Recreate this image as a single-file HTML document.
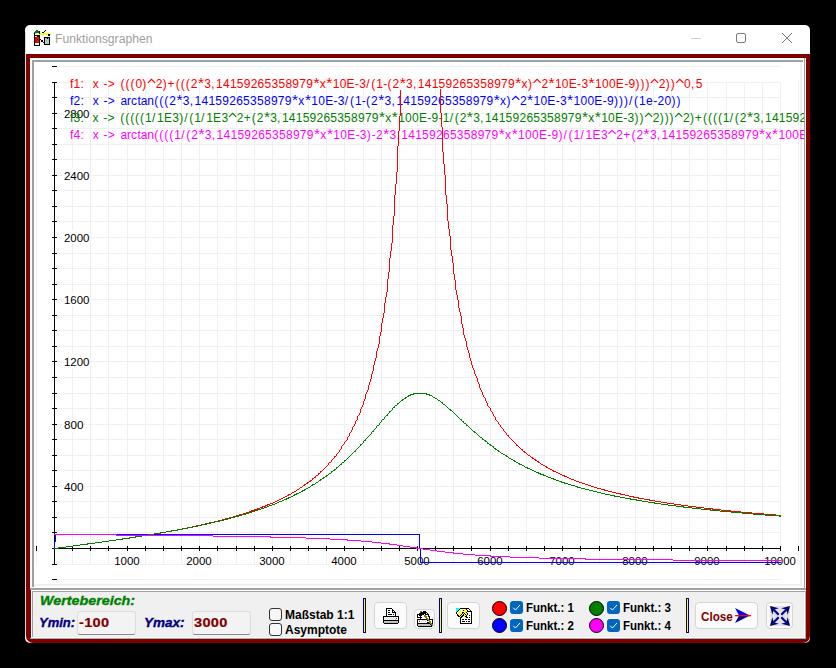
<!DOCTYPE html><html><head><meta charset="utf-8"><style>html,body{margin:0;padding:0}body{width:836px;height:668px;background:#000;position:relative;overflow:hidden;font-family:'Liberation Sans', sans-serif}div,span{box-sizing:border-box}.t{position:absolute;white-space:pre;line-height:1}</style></head><body><div style="position:absolute;left:25px;top:25px;width:785px;height:618px;background:#ffffff;border-radius:5px;"></div><div style="position:absolute;left:25px;top:32px;width:1px;height:604px;background:#d8d8d8;"></div><div class="t" style="left:55px;top:33px;font-size:12px;color:#a0a0a0;transform-origin:0 0;transform:scaleX(1.015)">Funktionsgraphen</div><svg style="position:absolute;left:32px;top:28px" width="20" height="18" shape-rendering="crispEdges"><rect x="4" y="2" width="2" height="1" fill="#008000"/><rect x="13" y="2" width="1" height="1" fill="#000000"/><rect x="3" y="3" width="4" height="1" fill="#008000"/><rect x="7" y="3" width="1" height="1" fill="#000000"/><rect x="12" y="3" width="1" height="1" fill="#000000"/><rect x="2" y="4" width="5" height="1" fill="#008000"/><rect x="7" y="4" width="1" height="1" fill="#000000"/><rect x="10" y="4" width="2" height="1" fill="#000000"/><rect x="2" y="5" width="1" height="1" fill="#000000"/><rect x="3" y="5" width="4" height="1" fill="#d8d8d8"/><rect x="7" y="5" width="1" height="1" fill="#000000"/><rect x="8" y="5" width="11" height="1" fill="#ffff00"/><rect x="2" y="6" width="1" height="1" fill="#000000"/><rect x="3" y="6" width="4" height="1" fill="#ffffff"/><rect x="7" y="6" width="9" height="1" fill="#ffff00"/><rect x="16" y="6" width="2" height="1" fill="#000000"/><rect x="2" y="7" width="6" height="1" fill="#000000"/><rect x="16" y="7" width="2" height="1" fill="#000000"/><rect x="2" y="8" width="1" height="1" fill="#000000"/><rect x="3" y="8" width="1" height="1" fill="#ffffff"/><rect x="4" y="8" width="1" height="1" fill="#d8d8d8"/><rect x="5" y="8" width="3" height="1" fill="#000000"/><rect x="2" y="9" width="1" height="1" fill="#000000"/><rect x="3" y="9" width="1" height="1" fill="#c00000"/><rect x="4" y="9" width="3" height="1" fill="#ff0000"/><rect x="7" y="9" width="1" height="1" fill="#000000"/><rect x="12" y="9" width="6" height="1" fill="#000000"/><rect x="2" y="10" width="1" height="1" fill="#000000"/><rect x="3" y="10" width="1" height="1" fill="#c00000"/><rect x="4" y="10" width="3" height="1" fill="#ff0000"/><rect x="7" y="10" width="1" height="1" fill="#000000"/><rect x="12" y="10" width="1" height="1" fill="#000000"/><rect x="13" y="10" width="1" height="1" fill="#c0c0c0"/><rect x="14" y="10" width="1" height="1" fill="#00ffff"/><rect x="15" y="10" width="1" height="1" fill="#000000"/><rect x="16" y="10" width="1" height="1" fill="#00ffff"/><rect x="17" y="10" width="1" height="1" fill="#000000"/><rect x="2" y="11" width="1" height="1" fill="#000000"/><rect x="3" y="11" width="1" height="1" fill="#c00000"/><rect x="4" y="11" width="1" height="1" fill="#ff0000"/><rect x="5" y="11" width="1" height="1" fill="#000000"/><rect x="6" y="11" width="1" height="1" fill="#ff0000"/><rect x="7" y="11" width="2" height="1" fill="#000000"/><rect x="12" y="11" width="1" height="1" fill="#000000"/><rect x="13" y="11" width="4" height="1" fill="#c0c0c0"/><rect x="17" y="11" width="1" height="1" fill="#000000"/><rect x="2" y="12" width="1" height="1" fill="#000000"/><rect x="3" y="12" width="1" height="1" fill="#c00000"/><rect x="4" y="12" width="3" height="1" fill="#ff0000"/><rect x="7" y="12" width="1" height="1" fill="#000000"/><rect x="9" y="12" width="2" height="1" fill="#000000"/><rect x="12" y="12" width="1" height="1" fill="#000000"/><rect x="13" y="12" width="4" height="1" fill="#c0c0c0"/><rect x="17" y="12" width="1" height="1" fill="#000000"/><rect x="2" y="13" width="1" height="1" fill="#000000"/><rect x="3" y="13" width="1" height="1" fill="#c00000"/><rect x="4" y="13" width="3" height="1" fill="#ff0000"/><rect x="7" y="13" width="1" height="1" fill="#000000"/><rect x="9" y="13" width="2" height="1" fill="#000000"/><rect x="12" y="13" width="1" height="1" fill="#000000"/><rect x="13" y="13" width="4" height="1" fill="#c0c0c0"/><rect x="17" y="13" width="1" height="1" fill="#000000"/><rect x="2" y="14" width="1" height="1" fill="#000000"/><rect x="3" y="14" width="1" height="1" fill="#c00000"/><rect x="4" y="14" width="3" height="1" fill="#ff0000"/><rect x="7" y="14" width="1" height="1" fill="#000000"/><rect x="11" y="14" width="2" height="1" fill="#000000"/><rect x="13" y="14" width="4" height="1" fill="#c0c0c0"/><rect x="17" y="14" width="1" height="1" fill="#000000"/><rect x="2" y="15" width="1" height="1" fill="#000000"/><rect x="3" y="15" width="4" height="1" fill="#ffffff"/><rect x="7" y="15" width="1" height="1" fill="#000000"/><rect x="12" y="15" width="1" height="1" fill="#000000"/><rect x="13" y="15" width="4" height="1" fill="#c0c0c0"/><rect x="17" y="15" width="1" height="1" fill="#000000"/><rect x="2" y="16" width="1" height="1" fill="#000000"/><rect x="3" y="16" width="4" height="1" fill="#ffffff"/><rect x="7" y="16" width="1" height="1" fill="#000000"/><rect x="12" y="16" width="6" height="1" fill="#000000"/><rect x="2" y="17" width="6" height="1" fill="#000000"/></svg><div style="position:absolute;left:691px;top:38px;width:10px;height:1px;background:#d0d0d0;"></div><div style="position:absolute;left:736px;top:33px;width:10px;height:10px;border:1px solid #7c7c7c;border-radius:2px"></div><svg style="position:absolute;left:781px;top:32px" width="12" height="12"><path d="M1 1L11 11M11 1L1 11" stroke="#7c7c7c" stroke-width="1"/></svg><div style="position:absolute;left:26px;top:54px;width:784px;height:589px;border:4px solid #800000;border-top-width:4px;border-radius:0 0 7px 7px;background:#fff"></div><div style="position:absolute;left:32px;top:60px;width:771px;height:2px;background:#a0a0a0;"></div><div style="position:absolute;left:32px;top:60px;width:2px;height:527px;background:#a0a0a0;"></div><div style="position:absolute;left:804px;top:58px;width:1px;height:531px;background:#a0a0a0;"></div><div style="position:absolute;left:30px;top:588px;width:776px;height:2px;background:#a0a0a0;"></div><div style="position:absolute;left:800px;top:62px;width:2px;height:524px;background:#f0f0f0;"></div><div style="position:absolute;left:34px;top:584px;width:768px;height:2px;background:#f0f0f0;"></div><svg style="position:absolute;left:0;top:0" width="836" height="668" shape-rendering="crispEdges"><defs><clipPath id="cc"><rect x="34" y="62" width="770" height="522"/></clipPath></defs><g clip-path="url(#cc)"><rect x="36" y="82" width="1" height="483" fill="#f0f0f0"/><rect x="54" y="82" width="1" height="483" fill="#f0f0f0"/><rect x="72" y="82" width="1" height="483" fill="#f0f0f0"/><rect x="90" y="82" width="1" height="483" fill="#f0f0f0"/><rect x="108" y="82" width="1" height="483" fill="#f0f0f0"/><rect x="127" y="82" width="1" height="483" fill="#f0f0f0"/><rect x="145" y="82" width="1" height="483" fill="#f0f0f0"/><rect x="163" y="82" width="1" height="483" fill="#f0f0f0"/><rect x="181" y="82" width="1" height="483" fill="#f0f0f0"/><rect x="199" y="82" width="1" height="483" fill="#f0f0f0"/><rect x="217" y="82" width="1" height="483" fill="#f0f0f0"/><rect x="236" y="82" width="1" height="483" fill="#f0f0f0"/><rect x="254" y="82" width="1" height="483" fill="#f0f0f0"/><rect x="272" y="82" width="1" height="483" fill="#f0f0f0"/><rect x="290" y="82" width="1" height="483" fill="#f0f0f0"/><rect x="308" y="82" width="1" height="483" fill="#f0f0f0"/><rect x="326" y="82" width="1" height="483" fill="#f0f0f0"/><rect x="344" y="82" width="1" height="483" fill="#f0f0f0"/><rect x="363" y="82" width="1" height="483" fill="#f0f0f0"/><rect x="381" y="82" width="1" height="483" fill="#f0f0f0"/><rect x="399" y="82" width="1" height="483" fill="#f0f0f0"/><rect x="417" y="82" width="1" height="483" fill="#f0f0f0"/><rect x="435" y="82" width="1" height="483" fill="#f0f0f0"/><rect x="453" y="82" width="1" height="483" fill="#f0f0f0"/><rect x="471" y="82" width="1" height="483" fill="#f0f0f0"/><rect x="490" y="82" width="1" height="483" fill="#f0f0f0"/><rect x="508" y="82" width="1" height="483" fill="#f0f0f0"/><rect x="526" y="82" width="1" height="483" fill="#f0f0f0"/><rect x="544" y="82" width="1" height="483" fill="#f0f0f0"/><rect x="562" y="82" width="1" height="483" fill="#f0f0f0"/><rect x="580" y="82" width="1" height="483" fill="#f0f0f0"/><rect x="599" y="82" width="1" height="483" fill="#f0f0f0"/><rect x="617" y="82" width="1" height="483" fill="#f0f0f0"/><rect x="635" y="82" width="1" height="483" fill="#f0f0f0"/><rect x="653" y="82" width="1" height="483" fill="#f0f0f0"/><rect x="671" y="82" width="1" height="483" fill="#f0f0f0"/><rect x="689" y="82" width="1" height="483" fill="#f0f0f0"/><rect x="707" y="82" width="1" height="483" fill="#f0f0f0"/><rect x="726" y="82" width="1" height="483" fill="#f0f0f0"/><rect x="744" y="82" width="1" height="483" fill="#f0f0f0"/><rect x="762" y="82" width="1" height="483" fill="#f0f0f0"/><rect x="780" y="82" width="1" height="483" fill="#f0f0f0"/><rect x="798" y="82" width="1" height="483" fill="#f0f0f0"/><rect x="58" y="579" width="723" height="1" fill="#f0f0f0"/><rect x="58" y="564" width="723" height="1" fill="#f0f0f0"/><rect x="58" y="548" width="723" height="1" fill="#f0f0f0"/><rect x="58" y="532" width="723" height="1" fill="#f0f0f0"/><rect x="58" y="517" width="723" height="1" fill="#f0f0f0"/><rect x="58" y="501" width="723" height="1" fill="#f0f0f0"/><rect x="58" y="486" width="723" height="1" fill="#f0f0f0"/><rect x="58" y="470" width="723" height="1" fill="#f0f0f0"/><rect x="58" y="455" width="723" height="1" fill="#f0f0f0"/><rect x="58" y="439" width="723" height="1" fill="#f0f0f0"/><rect x="58" y="424" width="723" height="1" fill="#f0f0f0"/><rect x="58" y="408" width="723" height="1" fill="#f0f0f0"/><rect x="58" y="393" width="723" height="1" fill="#f0f0f0"/><rect x="58" y="377" width="723" height="1" fill="#f0f0f0"/><rect x="58" y="361" width="723" height="1" fill="#f0f0f0"/><rect x="58" y="346" width="723" height="1" fill="#f0f0f0"/><rect x="58" y="330" width="723" height="1" fill="#f0f0f0"/><rect x="58" y="315" width="723" height="1" fill="#f0f0f0"/><rect x="58" y="299" width="723" height="1" fill="#f0f0f0"/><rect x="58" y="284" width="723" height="1" fill="#f0f0f0"/><rect x="58" y="268" width="723" height="1" fill="#f0f0f0"/><rect x="58" y="253" width="723" height="1" fill="#f0f0f0"/><rect x="58" y="237" width="723" height="1" fill="#f0f0f0"/><rect x="58" y="221" width="723" height="1" fill="#f0f0f0"/><rect x="58" y="206" width="723" height="1" fill="#f0f0f0"/><rect x="58" y="190" width="723" height="1" fill="#f0f0f0"/><rect x="58" y="175" width="723" height="1" fill="#f0f0f0"/><rect x="58" y="159" width="723" height="1" fill="#f0f0f0"/><rect x="58" y="144" width="723" height="1" fill="#f0f0f0"/><rect x="58" y="128" width="723" height="1" fill="#f0f0f0"/><rect x="58" y="113" width="723" height="1" fill="#f0f0f0"/><rect x="58" y="97" width="723" height="1" fill="#f0f0f0"/><rect x="58" y="82" width="723" height="1" fill="#f0f0f0"/><rect x="58" y="66" width="723" height="1" fill="#f0f0f0"/><rect x="54" y="82" width="1" height="483" fill="#000"/><rect x="54" y="548" width="727" height="1" fill="#000"/><rect x="52" y="579" width="5" height="1" fill="#000"/><rect x="52" y="564" width="5" height="1" fill="#000"/><rect x="52" y="548" width="5" height="1" fill="#000"/><rect x="52" y="532" width="5" height="1" fill="#000"/><rect x="52" y="517" width="5" height="1" fill="#000"/><rect x="52" y="501" width="5" height="1" fill="#000"/><rect x="52" y="486" width="5" height="1" fill="#000"/><rect x="52" y="470" width="5" height="1" fill="#000"/><rect x="52" y="455" width="5" height="1" fill="#000"/><rect x="52" y="439" width="5" height="1" fill="#000"/><rect x="52" y="424" width="5" height="1" fill="#000"/><rect x="52" y="408" width="5" height="1" fill="#000"/><rect x="52" y="393" width="5" height="1" fill="#000"/><rect x="52" y="377" width="5" height="1" fill="#000"/><rect x="52" y="361" width="5" height="1" fill="#000"/><rect x="52" y="346" width="5" height="1" fill="#000"/><rect x="52" y="330" width="5" height="1" fill="#000"/><rect x="52" y="315" width="5" height="1" fill="#000"/><rect x="52" y="299" width="5" height="1" fill="#000"/><rect x="52" y="284" width="5" height="1" fill="#000"/><rect x="52" y="268" width="5" height="1" fill="#000"/><rect x="52" y="253" width="5" height="1" fill="#000"/><rect x="52" y="237" width="5" height="1" fill="#000"/><rect x="52" y="221" width="5" height="1" fill="#000"/><rect x="52" y="206" width="5" height="1" fill="#000"/><rect x="52" y="190" width="5" height="1" fill="#000"/><rect x="52" y="175" width="5" height="1" fill="#000"/><rect x="52" y="159" width="5" height="1" fill="#000"/><rect x="52" y="144" width="5" height="1" fill="#000"/><rect x="52" y="128" width="5" height="1" fill="#000"/><rect x="52" y="113" width="5" height="1" fill="#000"/><rect x="52" y="97" width="5" height="1" fill="#000"/><rect x="52" y="82" width="5" height="1" fill="#000"/><rect x="52" y="66" width="5" height="1" fill="#000"/><rect x="36" y="546" width="1" height="5" fill="#000"/><rect x="54" y="546" width="1" height="5" fill="#000"/><rect x="72" y="546" width="1" height="5" fill="#000"/><rect x="90" y="546" width="1" height="5" fill="#000"/><rect x="108" y="546" width="1" height="5" fill="#000"/><rect x="127" y="546" width="1" height="5" fill="#000"/><rect x="145" y="546" width="1" height="5" fill="#000"/><rect x="163" y="546" width="1" height="5" fill="#000"/><rect x="181" y="546" width="1" height="5" fill="#000"/><rect x="199" y="546" width="1" height="5" fill="#000"/><rect x="217" y="546" width="1" height="5" fill="#000"/><rect x="236" y="546" width="1" height="5" fill="#000"/><rect x="254" y="546" width="1" height="5" fill="#000"/><rect x="272" y="546" width="1" height="5" fill="#000"/><rect x="290" y="546" width="1" height="5" fill="#000"/><rect x="308" y="546" width="1" height="5" fill="#000"/><rect x="326" y="546" width="1" height="5" fill="#000"/><rect x="344" y="546" width="1" height="5" fill="#000"/><rect x="363" y="546" width="1" height="5" fill="#000"/><rect x="381" y="546" width="1" height="5" fill="#000"/><rect x="399" y="546" width="1" height="5" fill="#000"/><rect x="417" y="546" width="1" height="5" fill="#000"/><rect x="435" y="546" width="1" height="5" fill="#000"/><rect x="453" y="546" width="1" height="5" fill="#000"/><rect x="471" y="546" width="1" height="5" fill="#000"/><rect x="490" y="546" width="1" height="5" fill="#000"/><rect x="508" y="546" width="1" height="5" fill="#000"/><rect x="526" y="546" width="1" height="5" fill="#000"/><rect x="544" y="546" width="1" height="5" fill="#000"/><rect x="562" y="546" width="1" height="5" fill="#000"/><rect x="580" y="546" width="1" height="5" fill="#000"/><rect x="599" y="546" width="1" height="5" fill="#000"/><rect x="617" y="546" width="1" height="5" fill="#000"/><rect x="635" y="546" width="1" height="5" fill="#000"/><rect x="653" y="546" width="1" height="5" fill="#000"/><rect x="671" y="546" width="1" height="5" fill="#000"/><rect x="689" y="546" width="1" height="5" fill="#000"/><rect x="707" y="546" width="1" height="5" fill="#000"/><rect x="726" y="546" width="1" height="5" fill="#000"/><rect x="744" y="546" width="1" height="5" fill="#000"/><rect x="762" y="546" width="1" height="5" fill="#000"/><rect x="780" y="546" width="1" height="5" fill="#000"/><rect x="798" y="546" width="1" height="5" fill="#000"/><rect x="63" y="479" width="20" height="14" fill="#fff"/><text x="64" y="491" style="font-family:'Liberation Sans', sans-serif;font-size:11px;fill:#000" textLength="19.5" lengthAdjust="spacingAndGlyphs">400</text><rect x="63" y="417" width="20" height="14" fill="#fff"/><text x="64" y="429" style="font-family:'Liberation Sans', sans-serif;font-size:11px;fill:#000" textLength="19.5" lengthAdjust="spacingAndGlyphs">800</text><rect x="63" y="354" width="26" height="14" fill="#fff"/><text x="64" y="366" style="font-family:'Liberation Sans', sans-serif;font-size:11px;fill:#000" textLength="25.5" lengthAdjust="spacingAndGlyphs">1200</text><rect x="63" y="292" width="26" height="14" fill="#fff"/><text x="64" y="304" style="font-family:'Liberation Sans', sans-serif;font-size:11px;fill:#000" textLength="25.5" lengthAdjust="spacingAndGlyphs">1600</text><rect x="63" y="230" width="26" height="14" fill="#fff"/><text x="64" y="242" style="font-family:'Liberation Sans', sans-serif;font-size:11px;fill:#000" textLength="25.5" lengthAdjust="spacingAndGlyphs">2000</text><rect x="63" y="168" width="26" height="14" fill="#fff"/><text x="64" y="180" style="font-family:'Liberation Sans', sans-serif;font-size:11px;fill:#000" textLength="25.5" lengthAdjust="spacingAndGlyphs">2400</text><rect x="63" y="106" width="26" height="14" fill="#fff"/><text x="64" y="118" style="font-family:'Liberation Sans', sans-serif;font-size:11px;fill:#000" textLength="25.5" lengthAdjust="spacingAndGlyphs">2800</text><rect x="114" y="554" width="26" height="14" fill="#fff"/><text x="127" y="565" text-anchor="middle" style="font-family:'Liberation Sans', sans-serif;font-size:11px;fill:#000" textLength="25.5" lengthAdjust="spacingAndGlyphs">1000</text><rect x="186" y="554" width="26" height="14" fill="#fff"/><text x="199" y="565" text-anchor="middle" style="font-family:'Liberation Sans', sans-serif;font-size:11px;fill:#000" textLength="25.5" lengthAdjust="spacingAndGlyphs">2000</text><rect x="259" y="554" width="26" height="14" fill="#fff"/><text x="272" y="565" text-anchor="middle" style="font-family:'Liberation Sans', sans-serif;font-size:11px;fill:#000" textLength="25.5" lengthAdjust="spacingAndGlyphs">3000</text><rect x="331" y="554" width="26" height="14" fill="#fff"/><text x="344" y="565" text-anchor="middle" style="font-family:'Liberation Sans', sans-serif;font-size:11px;fill:#000" textLength="25.5" lengthAdjust="spacingAndGlyphs">4000</text><rect x="404" y="554" width="26" height="14" fill="#fff"/><text x="417" y="565" text-anchor="middle" style="font-family:'Liberation Sans', sans-serif;font-size:11px;fill:#000" textLength="25.5" lengthAdjust="spacingAndGlyphs">5000</text><rect x="477" y="554" width="26" height="14" fill="#fff"/><text x="490" y="565" text-anchor="middle" style="font-family:'Liberation Sans', sans-serif;font-size:11px;fill:#000" textLength="25.5" lengthAdjust="spacingAndGlyphs">6000</text><rect x="549" y="554" width="26" height="14" fill="#fff"/><text x="562" y="565" text-anchor="middle" style="font-family:'Liberation Sans', sans-serif;font-size:11px;fill:#000" textLength="25.5" lengthAdjust="spacingAndGlyphs">7000</text><rect x="622" y="554" width="26" height="14" fill="#fff"/><text x="635" y="565" text-anchor="middle" style="font-family:'Liberation Sans', sans-serif;font-size:11px;fill:#000" textLength="25.5" lengthAdjust="spacingAndGlyphs">8000</text><rect x="694" y="554" width="26" height="14" fill="#fff"/><text x="707" y="565" text-anchor="middle" style="font-family:'Liberation Sans', sans-serif;font-size:11px;fill:#000" textLength="25.5" lengthAdjust="spacingAndGlyphs">9000</text><rect x="764" y="554" width="32" height="14" fill="#fff"/><text x="780" y="565" text-anchor="middle" style="font-family:'Liberation Sans', sans-serif;font-size:11px;fill:#000" textLength="31.5" lengthAdjust="spacingAndGlyphs">10000</text><text x="70.1 73.5 80.5 83.9 88.3 92.7 99.1 103.4 107.7 116.1 120.5 125.4 130.4 135.4 142.3 147.3 155.7 162.7 167.6 175.8 180.8 185.8 190.7 197.7 204.3 211.2 216.0 222.9 229.9 236.8 243.8 250.7 257.6 264.6 271.5 278.5 285.4 292.3 299.3 306.2 313.2 319.7 326.1 332.7 339.7 346.6 355.0 359.3 366.2 371.3 376.3 383.3 387.6 392.6 399.5 406.1 413.0 417.8 424.8 431.7 438.6 445.6 452.5 459.5 466.4 473.3 480.3 487.2 494.2 501.1 508.0 515.0 521.6 528.0 532.9 541.4 548.3 554.9 561.8 568.8 577.1 581.4 588.4 595.0 601.9 608.9 615.8 624.2 628.5 635.4 640.4 645.4 650.3 658.8 665.7 670.7 675.6 684.1 691.0 695.8" y="88" style="font-family:'Liberation Sans', sans-serif;font-size:12px;fill:#ff0000" xml:space="preserve">f1:  x -> (((0) 2)+(((2 3,14159265358979 x 10E-3/(1-(2 3,14159265358979 x) 2 10E-3 100E-9))) 2)) 0,5</text><path d="M147.9 82.8L151.5 79.4L155.1 82.8" stroke="#ff0000" stroke-width="1.15" fill="none" shape-rendering="auto"/><text x="197.9" y="88.3" style="font-family:'Liberation Sans', sans-serif;font-size:15.5px;fill:#ff0000">*</text><text x="313.4" y="88.3" style="font-family:'Liberation Sans', sans-serif;font-size:15.5px;fill:#ff0000">*</text><text x="326.3" y="88.3" style="font-family:'Liberation Sans', sans-serif;font-size:15.5px;fill:#ff0000">*</text><text x="399.7" y="88.3" style="font-family:'Liberation Sans', sans-serif;font-size:15.5px;fill:#ff0000">*</text><text x="515.2" y="88.3" style="font-family:'Liberation Sans', sans-serif;font-size:15.5px;fill:#ff0000">*</text><path d="M533.5 82.8L537.1 79.4L540.7 82.8" stroke="#ff0000" stroke-width="1.15" fill="none" shape-rendering="auto"/><text x="548.5" y="88.3" style="font-family:'Liberation Sans', sans-serif;font-size:15.5px;fill:#ff0000">*</text><text x="588.6" y="88.3" style="font-family:'Liberation Sans', sans-serif;font-size:15.5px;fill:#ff0000">*</text><path d="M650.9 82.8L654.5 79.4L658.1 82.8" stroke="#ff0000" stroke-width="1.15" fill="none" shape-rendering="auto"/><path d="M676.2 82.8L679.8 79.4L683.4 82.8" stroke="#ff0000" stroke-width="1.15" fill="none" shape-rendering="auto"/><text x="70.1 73.5 80.5 83.9 88.3 92.7 99.1 103.4 107.7 116.1 120.5 127.1 131.1 137.4 140.7 147.3 154.3 159.3 164.3 169.3 176.2 182.8 189.7 194.5 201.5 208.4 215.3 222.3 229.2 236.2 243.1 250.0 257.0 263.9 270.9 277.8 284.7 291.7 298.3 304.7 311.3 318.2 325.2 333.5 337.8 344.8 349.9 354.9 361.8 366.1 371.1 378.0 384.6 391.6 396.4 403.3 410.2 417.2 424.1 431.0 438.0 444.9 451.9 458.8 465.7 472.7 479.6 486.6 493.5 500.1 506.5 511.5 519.9 526.8 533.4 540.4 547.3 555.7 560.0 566.9 573.5 580.4 587.4 594.3 602.7 607.0 613.9 618.9 623.9 628.9 634.0 639.0 645.9 653.2 657.6 664.5 671.4 676.4" y="105" style="font-family:'Liberation Sans', sans-serif;font-size:12px;fill:#0000ff" xml:space="preserve">f2:  x -> arctan(((2 3,14159265358979 x 10E-3/(1-(2 3,14159265358979 x) 2 10E-3 100E-9)))/(1e-20))</text><text x="176.4" y="105.3" style="font-family:'Liberation Sans', sans-serif;font-size:15.5px;fill:#0000ff">*</text><text x="291.9" y="105.3" style="font-family:'Liberation Sans', sans-serif;font-size:15.5px;fill:#0000ff">*</text><text x="304.9" y="105.3" style="font-family:'Liberation Sans', sans-serif;font-size:15.5px;fill:#0000ff">*</text><text x="378.2" y="105.3" style="font-family:'Liberation Sans', sans-serif;font-size:15.5px;fill:#0000ff">*</text><text x="493.7" y="105.3" style="font-family:'Liberation Sans', sans-serif;font-size:15.5px;fill:#0000ff">*</text><path d="M512.1 99.8L515.7 96.4L519.3 99.8" stroke="#0000ff" stroke-width="1.15" fill="none" shape-rendering="auto"/><text x="527.0" y="105.3" style="font-family:'Liberation Sans', sans-serif;font-size:15.5px;fill:#0000ff">*</text><text x="567.1" y="105.3" style="font-family:'Liberation Sans', sans-serif;font-size:15.5px;fill:#0000ff">*</text><text x="70.1 73.5 80.4 83.8 88.2 92.6 98.9 103.3 107.6 115.9 120.3 125.2 130.2 135.1 140.1 145.0 151.9 157.0 164.0 172.3 179.2 184.2 189.2 194.2 201.1 206.2 213.1 221.5 228.4 236.7 243.7 251.8 256.8 263.7 270.2 277.1 281.9 288.8 295.7 302.7 309.6 316.5 323.4 330.3 337.2 344.1 351.0 358.0 364.9 371.8 378.7 385.3 391.6 398.2 405.1 412.0 418.9 427.3 431.6 438.5 442.8 449.7 454.8 459.7 466.6 473.2 480.1 484.9 491.8 498.7 505.6 512.5 519.4 526.4 533.3 540.2 547.1 554.0 560.9 567.8 574.7 581.7 588.2 594.6 601.2 608.1 615.0 623.3 627.6 634.5 639.5 644.4 652.8 659.7 664.7 669.6 674.6 683.0 689.9 694.8 703.0 707.9 712.9 717.9 722.8 729.7 734.8 739.8 746.7 753.3 760.2 764.9 771.9 778.8 785.7 792.6 799.5 806.4 813.3 820.2 827.2 834.1 841.0 847.9 854.8" y="122" style="font-family:'Liberation Sans', sans-serif;font-size:12px;fill:#008000" xml:space="preserve">f3:  x -> (((((1/1E3)/(1/1E3 2+(2 3,14159265358979 x 100E-9-1/(2 3,14159265358979 x 10E-3)) 2))) 2)+((((1/(2 3,14159265358979</text><path d="M229.0 116.8L232.6 113.4L236.2 116.8" stroke="#008000" stroke-width="1.15" fill="none" shape-rendering="auto"/><text x="263.9" y="122.3" style="font-family:'Liberation Sans', sans-serif;font-size:15.5px;fill:#008000">*</text><text x="378.9" y="122.3" style="font-family:'Liberation Sans', sans-serif;font-size:15.5px;fill:#008000">*</text><text x="391.8" y="122.3" style="font-family:'Liberation Sans', sans-serif;font-size:15.5px;fill:#008000">*</text><text x="466.8" y="122.3" style="font-family:'Liberation Sans', sans-serif;font-size:15.5px;fill:#008000">*</text><text x="581.9" y="122.3" style="font-family:'Liberation Sans', sans-serif;font-size:15.5px;fill:#008000">*</text><text x="594.8" y="122.3" style="font-family:'Liberation Sans', sans-serif;font-size:15.5px;fill:#008000">*</text><path d="M645.0 116.8L648.6 113.4L652.2 116.8" stroke="#008000" stroke-width="1.15" fill="none" shape-rendering="auto"/><path d="M675.2 116.8L678.8 113.4L682.4 116.8" stroke="#008000" stroke-width="1.15" fill="none" shape-rendering="auto"/><text x="746.9" y="122.3" style="font-family:'Liberation Sans', sans-serif;font-size:15.5px;fill:#008000">*</text><text x="70.1 73.5 80.5 83.9 88.3 92.7 99.1 103.4 107.7 116.1 120.5 127.1 131.1 137.4 140.7 147.3 154.3 159.3 164.3 169.3 174.2 181.2 186.3 191.3 198.2 204.8 211.7 216.5 223.5 230.4 237.4 244.3 251.2 258.2 265.1 272.1 279.0 285.9 292.9 299.8 306.8 313.7 320.3 326.7 333.3 340.2 347.2 355.5 359.8 366.8 371.7 376.1 383.0 389.6 396.5 401.3 408.3 415.2 422.1 429.1 436.0 443.0 449.9 456.8 463.8 470.7 477.7 484.6 491.5 498.5 505.1 511.5 518.1 525.0 531.9 538.9 547.3 551.6 558.5 563.5 568.6 573.6 580.5 585.6 592.6 600.9 607.9 616.3 623.2 631.4 636.4 643.3 649.9 656.8 661.6 668.6 675.5 682.5 689.4 696.3 703.3 710.2 717.2 724.1 731.0 738.0 744.9 751.9 758.8 765.4 771.8 778.4 785.3 792.3 799.2 807.6 811.9" y="139" style="font-family:'Liberation Sans', sans-serif;font-size:12px;fill:#ff00ff" xml:space="preserve">f4:  x -> arctan((((1/(2 3,14159265358979 x 10E-3)-2 3,14159265358979 x 100E-9)/(1/1E3 2+(2 3,14159265358979 x 100E-9</text><text x="198.4" y="139.3" style="font-family:'Liberation Sans', sans-serif;font-size:15.5px;fill:#ff00ff">*</text><text x="313.9" y="139.3" style="font-family:'Liberation Sans', sans-serif;font-size:15.5px;fill:#ff00ff">*</text><text x="326.9" y="139.3" style="font-family:'Liberation Sans', sans-serif;font-size:15.5px;fill:#ff00ff">*</text><text x="383.2" y="139.3" style="font-family:'Liberation Sans', sans-serif;font-size:15.5px;fill:#ff00ff">*</text><text x="498.7" y="139.3" style="font-family:'Liberation Sans', sans-serif;font-size:15.5px;fill:#ff00ff">*</text><text x="511.7" y="139.3" style="font-family:'Liberation Sans', sans-serif;font-size:15.5px;fill:#ff00ff">*</text><path d="M608.5 133.8L612.1 130.4L615.7 133.8" stroke="#ff00ff" stroke-width="1.15" fill="none" shape-rendering="auto"/><text x="643.5" y="139.3" style="font-family:'Liberation Sans', sans-serif;font-size:15.5px;fill:#ff00ff">*</text><text x="759.0" y="139.3" style="font-family:'Liberation Sans', sans-serif;font-size:15.5px;fill:#ff00ff">*</text><text x="772.0" y="139.3" style="font-family:'Liberation Sans', sans-serif;font-size:15.5px;fill:#ff00ff">*</text><path fill="#ff0000" d="M440 89h1v1h-1zM400 90h1v1h-1zM440 90h1v1h-1zM400 91h1v1h-1zM440 91h1v1h-1zM400 92h1v1h-1zM440 92h1v1h-1zM400 93h1v1h-1zM440 93h1v1h-1zM400 94h1v1h-1zM440 94h1v1h-1zM400 95h1v1h-1zM440 95h1v1h-1zM400 96h1v1h-1zM440 96h1v1h-1zM400 97h1v1h-1zM440 97h1v1h-1zM400 98h1v1h-1zM440 98h1v1h-1zM400 99h1v1h-1zM440 99h1v1h-1zM400 100h1v1h-1zM440 100h1v1h-1zM400 101h1v1h-1zM440 101h1v1h-1zM400 102h1v1h-1zM440 102h1v1h-1zM400 103h1v1h-1zM440 103h1v1h-1zM400 104h1v1h-1zM440 104h1v1h-1zM400 105h1v1h-1zM440 105h1v1h-1zM400 106h1v1h-1zM440 106h1v1h-1zM400 107h1v1h-1zM440 107h1v1h-1zM400 108h1v1h-1zM440 108h1v1h-1zM400 109h1v1h-1zM440 109h1v1h-1zM400 110h1v1h-1zM440 110h1v1h-1zM400 111h1v1h-1zM440 111h1v1h-1zM400 112h1v1h-1zM440 112h1v1h-1zM400 113h1v1h-1zM441 113h1v1h-1zM400 114h1v1h-1zM441 114h1v1h-1zM400 115h1v1h-1zM441 115h1v1h-1zM399 116h1v1h-1zM441 116h1v1h-1zM399 117h1v1h-1zM441 117h1v1h-1zM399 118h1v1h-1zM441 118h1v1h-1zM399 119h1v1h-1zM441 119h1v1h-1zM399 120h1v1h-1zM441 120h1v1h-1zM399 121h1v1h-1zM441 121h1v1h-1zM399 122h1v1h-1zM441 122h1v1h-1zM399 123h1v1h-1zM441 123h1v1h-1zM399 124h1v1h-1zM441 124h1v1h-1zM399 125h1v1h-1zM441 125h1v1h-1zM399 126h1v1h-1zM441 126h1v1h-1zM399 127h1v1h-1zM442 127h1v1h-1zM399 128h1v1h-1zM442 128h1v1h-1zM399 129h1v1h-1zM442 129h1v1h-1zM399 130h1v1h-1zM442 130h1v1h-1zM398 131h1v1h-1zM442 131h1v1h-1zM398 132h1v1h-1zM442 132h1v1h-1zM398 133h1v1h-1zM442 133h1v1h-1zM398 134h1v1h-1zM442 134h1v1h-1zM398 135h1v1h-1zM442 135h1v1h-1zM398 136h1v1h-1zM442 136h1v1h-1zM398 137h1v1h-1zM442 137h1v1h-1zM398 138h1v1h-1zM442 138h1v1h-1zM398 139h1v1h-1zM442 139h1v1h-1zM398 140h1v1h-1zM442 140h1v1h-1zM398 141h1v1h-1zM442 141h1v1h-1zM398 142h1v1h-1zM442 142h1v1h-1zM398 143h1v1h-1zM442 143h1v1h-1zM398 144h1v1h-1zM442 144h1v1h-1zM398 145h1v1h-1zM442 145h1v1h-1zM397 146h1v1h-1zM442 146h1v1h-1zM397 147h1v1h-1zM442 147h1v1h-1zM397 148h1v1h-1zM442 148h1v1h-1zM397 149h1v1h-1zM442 149h1v1h-1zM397 150h1v1h-1zM442 150h1v1h-1zM397 151h1v1h-1zM442 151h1v1h-1zM397 152h1v1h-1zM443 152h1v1h-1zM397 153h1v1h-1zM443 153h1v1h-1zM397 154h1v1h-1zM443 154h1v1h-1zM397 155h1v1h-1zM443 155h1v1h-1zM397 156h1v1h-1zM443 156h1v1h-1zM397 157h1v1h-1zM443 157h1v1h-1zM397 158h1v1h-1zM443 158h1v1h-1zM397 159h1v1h-1zM443 159h1v1h-1zM397 160h1v1h-1zM443 160h1v1h-1zM397 161h1v1h-1zM443 161h1v1h-1zM397 162h1v1h-1zM443 162h1v1h-1zM397 163h1v1h-1zM443 163h1v1h-1zM397 164h1v1h-1zM444 164h1v1h-1zM397 165h1v1h-1zM444 165h1v1h-1zM397 166h1v1h-1zM444 166h1v1h-1zM397 167h1v1h-1zM444 167h1v1h-1zM397 168h1v1h-1zM444 168h1v1h-1zM397 169h1v1h-1zM444 169h1v1h-1zM397 170h1v1h-1zM444 170h1v1h-1zM397 171h1v1h-1zM444 171h1v1h-1zM396 172h1v1h-1zM444 172h1v1h-1zM396 173h1v1h-1zM444 173h1v1h-1zM396 174h1v1h-1zM444 174h1v1h-1zM396 175h1v1h-1zM445 175h1v1h-1zM396 176h1v1h-1zM445 176h1v1h-1zM396 177h1v1h-1zM445 177h1v1h-1zM396 178h1v1h-1zM445 178h1v1h-1zM396 179h1v1h-1zM445 179h1v1h-1zM396 180h1v1h-1zM445 180h1v1h-1zM396 181h1v1h-1zM445 181h1v1h-1zM396 182h1v1h-1zM445 182h1v1h-1zM396 183h1v1h-1zM445 183h1v1h-1zM395 184h1v1h-1zM445 184h1v1h-1zM395 185h1v1h-1zM445 185h1v1h-1zM395 186h1v1h-1zM445 186h1v1h-1zM395 187h1v1h-1zM445 187h1v1h-1zM395 188h1v1h-1zM445 188h1v1h-1zM395 189h1v1h-1zM445 189h1v1h-1zM395 190h1v1h-1zM445 190h1v1h-1zM395 191h1v1h-1zM445 191h1v1h-1zM395 192h1v1h-1zM445 192h1v1h-1zM395 193h1v1h-1zM445 193h1v1h-1zM395 194h1v1h-1zM445 194h1v1h-1zM394 195h1v1h-1zM446 195h1v1h-1zM394 196h1v1h-1zM446 196h1v1h-1zM394 197h1v1h-1zM446 197h1v1h-1zM394 198h1v1h-1zM446 198h1v1h-1zM394 199h1v1h-1zM446 199h1v1h-1zM394 200h1v1h-1zM446 200h1v1h-1zM394 201h1v1h-1zM446 201h1v1h-1zM394 202h1v1h-1zM446 202h1v1h-1zM394 203h1v1h-1zM446 203h1v1h-1zM394 204h1v1h-1zM447 204h1v1h-1zM394 205h1v1h-1zM447 205h1v1h-1zM394 206h1v1h-1zM447 206h1v1h-1zM394 207h1v1h-1zM447 207h1v1h-1zM394 208h1v1h-1zM447 208h1v1h-1zM394 209h1v1h-1zM447 209h1v1h-1zM394 210h1v1h-1zM447 210h1v1h-1zM394 211h1v1h-1zM447 211h1v1h-1zM394 212h1v1h-1zM447 212h1v1h-1zM394 213h1v1h-1zM447 213h1v1h-1zM394 214h1v1h-1zM447 214h1v1h-1zM394 215h1v1h-1zM447 215h1v1h-1zM393 216h1v1h-1zM447 216h1v1h-1zM393 217h1v1h-1zM447 217h1v1h-1zM393 218h1v1h-1zM447 218h1v1h-1zM393 219h1v1h-1zM447 219h1v1h-1zM393 220h1v1h-1zM447 220h1v1h-1zM393 221h1v1h-1zM448 221h1v1h-1zM393 222h1v1h-1zM448 222h1v1h-1zM393 223h1v1h-1zM448 223h1v1h-1zM393 224h1v1h-1zM448 224h1v1h-1zM392 225h1v1h-1zM448 225h1v1h-1zM392 226h1v1h-1zM448 226h1v1h-1zM392 227h1v1h-1zM448 227h1v1h-1zM392 228h1v1h-1zM448 228h1v1h-1zM392 229h1v1h-1zM449 229h1v1h-1zM392 230h1v1h-1zM449 230h1v1h-1zM392 231h1v1h-1zM449 231h1v1h-1zM392 232h1v1h-1zM449 232h1v1h-1zM392 233h1v1h-1zM449 233h1v1h-1zM392 234h1v1h-1zM449 234h1v1h-1zM392 235h1v1h-1zM449 235h1v1h-1zM392 236h1v1h-1zM450 236h1v1h-1zM392 237h1v1h-1zM450 237h1v1h-1zM392 238h1v1h-1zM450 238h1v1h-1zM392 239h1v1h-1zM450 239h1v1h-1zM392 240h1v1h-1zM450 240h1v1h-1zM392 241h1v1h-1zM450 241h1v1h-1zM392 242h1v1h-1zM450 242h1v1h-1zM391 243h1v1h-1zM450 243h1v1h-1zM391 244h1v1h-1zM450 244h1v1h-1zM391 245h1v1h-1zM450 245h1v1h-1zM391 246h1v1h-1zM450 246h1v1h-1zM391 247h1v1h-1zM450 247h1v1h-1zM391 248h1v1h-1zM450 248h1v1h-1zM391 249h1v1h-1zM450 249h1v1h-1zM391 250h1v1h-1zM451 250h1v1h-1zM390 251h1v1h-1zM451 251h1v1h-1zM390 252h1v1h-1zM451 252h1v1h-1zM390 253h1v1h-1zM451 253h1v1h-1zM390 254h1v1h-1zM451 254h1v1h-1zM390 255h1v1h-1zM451 255h1v1h-1zM390 256h1v1h-1zM452 256h1v1h-1zM390 257h1v1h-1zM452 257h1v1h-1zM389 258h1v1h-1zM452 258h1v1h-1zM389 259h1v1h-1zM452 259h1v1h-1zM389 260h1v1h-1zM452 260h1v1h-1zM389 261h1v1h-1zM452 261h1v1h-1zM389 262h1v1h-1zM452 262h1v1h-1zM389 263h1v1h-1zM453 263h1v1h-1zM389 264h1v1h-1zM453 264h1v1h-1zM389 265h1v1h-1zM453 265h1v1h-1zM389 266h1v1h-1zM453 266h1v1h-1zM389 267h1v1h-1zM453 267h1v1h-1zM389 268h1v1h-1zM453 268h1v1h-1zM389 269h1v1h-1zM453 269h1v1h-1zM389 270h1v1h-1zM453 270h1v1h-1zM389 271h1v1h-1zM453 271h1v1h-1zM388 272h1v1h-1zM453 272h1v1h-1zM388 273h1v1h-1zM453 273h1v1h-1zM388 274h1v1h-1zM454 274h1v1h-1zM388 275h1v1h-1zM454 275h1v1h-1zM388 276h1v1h-1zM454 276h1v1h-1zM388 277h1v1h-1zM454 277h1v1h-1zM388 278h1v1h-1zM454 278h1v1h-1zM387 279h1v1h-1zM454 279h1v1h-1zM387 280h1v1h-1zM455 280h1v1h-1zM387 281h1v1h-1zM455 281h1v1h-1zM387 282h1v1h-1zM455 282h1v1h-1zM387 283h1v1h-1zM455 283h1v1h-1zM387 284h1v1h-1zM455 284h1v1h-1zM387 285h1v1h-1zM455 285h1v1h-1zM387 286h1v1h-1zM455 286h1v1h-1zM387 287h1v1h-1zM455 287h1v1h-1zM387 288h1v1h-1zM455 288h1v1h-1zM387 289h1v1h-1zM455 289h1v1h-1zM387 290h1v1h-1zM456 290h1v1h-1zM387 291h1v1h-1zM456 291h1v1h-1zM386 292h1v1h-1zM456 292h1v1h-1zM386 293h1v1h-1zM456 293h1v1h-1zM386 294h1v1h-1zM456 294h1v1h-1zM386 295h1v1h-1zM457 295h1v1h-1zM386 296h1v1h-1zM457 296h1v1h-1zM385 297h1v1h-1zM457 297h1v1h-1zM385 298h1v1h-1zM457 298h1v1h-1zM385 299h1v1h-1zM457 299h1v1h-1zM385 300h1v1h-1zM458 300h1v1h-1zM385 301h1v1h-1zM458 301h1v1h-1zM385 302h1v1h-1zM458 302h1v1h-1zM384 303h1v1h-1zM458 303h1v1h-1zM384 304h1v1h-1zM458 304h1v1h-1zM384 305h1v1h-1zM458 305h1v1h-1zM384 306h1v1h-1zM458 306h1v1h-1zM384 307h1v1h-1zM458 307h1v1h-1zM384 308h1v1h-1zM459 308h1v1h-1zM384 309h1v1h-1zM459 309h1v1h-1zM384 310h1v1h-1zM459 310h1v1h-1zM384 311h1v1h-1zM459 311h1v1h-1zM384 312h1v1h-1zM460 312h1v1h-1zM383 313h1v1h-1zM460 313h1v1h-1zM383 314h1v1h-1zM460 314h1v1h-1zM383 315h1v1h-1zM460 315h1v1h-1zM383 316h1v1h-1zM461 316h1v1h-1zM383 317h1v1h-1zM461 317h1v1h-1zM382 318h1v1h-1zM461 318h1v1h-1zM382 319h1v1h-1zM461 319h1v1h-1zM382 320h1v1h-1zM461 320h1v1h-1zM382 321h1v1h-1zM461 321h1v1h-1zM382 322h1v1h-1zM461 322h1v1h-1zM381 323h1v1h-1zM461 323h1v1h-1zM381 324h1v1h-1zM462 324h1v1h-1zM381 325h1v1h-1zM462 325h1v1h-1zM381 326h1v1h-1zM462 326h1v1h-1zM381 327h1v1h-1zM462 327h1v1h-1zM381 328h1v1h-1zM463 328h1v1h-1zM381 329h1v1h-1zM463 329h1v1h-1zM381 330h1v1h-1zM463 330h1v1h-1zM381 331h1v1h-1zM463 331h1v1h-1zM380 332h1v1h-1zM463 332h1v1h-1zM380 333h1v1h-1zM463 333h1v1h-1zM380 334h1v1h-1zM463 334h1v1h-1zM380 335h1v1h-1zM464 335h1v1h-1zM379 336h1v1h-1zM464 336h1v1h-1zM379 337h1v1h-1zM464 337h1v1h-1zM379 338h1v1h-1zM465 338h1v1h-1zM379 339h1v1h-1zM465 339h1v1h-1zM379 340h1v1h-1zM465 340h1v1h-1zM379 341h1v1h-1zM466 341h1v1h-1zM379 342h1v1h-1zM466 342h1v1h-1zM379 343h1v1h-1zM466 343h1v1h-1zM378 344h1v1h-1zM466 344h1v1h-1zM378 345h1v1h-1zM466 345h1v1h-1zM378 346h1v1h-1zM466 346h1v1h-1zM378 347h1v1h-1zM467 347h1v1h-1zM377 348h1v1h-1zM467 348h1v1h-1zM377 349h1v1h-1zM467 349h1v1h-1zM377 350h1v1h-1zM468 350h1v1h-1zM376 351h1v1h-1zM468 351h1v1h-1zM376 352h1v1h-1zM468 352h1v1h-1zM376 353h1v1h-1zM469 353h1v1h-1zM376 354h1v1h-1zM469 354h1v1h-1zM376 355h1v1h-1zM469 355h1v1h-1zM376 356h1v1h-1zM469 356h1v1h-1zM376 357h1v1h-1zM469 357h1v1h-1zM375 358h1v1h-1zM470 358h1v1h-1zM375 359h1v1h-1zM470 359h1v1h-1zM375 360h1v1h-1zM470 360h1v1h-1zM374 361h1v1h-1zM471 361h1v1h-1zM374 362h1v1h-1zM471 362h1v1h-1zM374 363h1v1h-1zM471 363h1v1h-1zM374 364h1v1h-1zM471 364h1v1h-1zM373 365h1v1h-1zM472 365h1v1h-1zM373 366h1v1h-1zM472 366h1v1h-1zM373 367h1v1h-1zM472 367h1v1h-1zM373 368h1v1h-1zM473 368h1v1h-1zM373 369h1v1h-1zM473 369h1v1h-1zM373 370h1v1h-1zM474 370h1v1h-1zM372 371h1v1h-1zM474 371h1v1h-1zM372 372h1v1h-1zM474 372h1v1h-1zM372 373h1v1h-1zM474 373h1v1h-1zM371 374h1v1h-1zM475 374h1v1h-1zM371 375h1v1h-1zM475 375h1v1h-1zM371 376h1v1h-1zM476 376h1v1h-1zM371 377h1v1h-1zM476 377h1v1h-1zM371 378h1v1h-1zM477 378h1v1h-1zM370 379h1v1h-1zM477 379h1v1h-1zM370 380h1v1h-1zM477 380h1v1h-1zM370 381h1v1h-1zM477 381h1v1h-1zM369 382h1v1h-1zM478 382h1v1h-1zM369 383h1v1h-1zM478 383h1v1h-1zM369 384h1v1h-1zM479 384h1v1h-1zM368 385h1v1h-1zM479 385h1v1h-1zM368 386h1v1h-1zM479 386h1v1h-1zM368 387h1v1h-1zM479 387h1v1h-1zM368 388h1v1h-1zM480 388h1v1h-1zM368 389h1v1h-1zM480 389h1v1h-1zM367 390h1v1h-1zM481 390h1v1h-1zM367 391h1v1h-1zM481 391h1v1h-1zM366 392h1v1h-1zM482 392h1v1h-1zM366 393h1v1h-1zM482 393h1v1h-1zM365 394h1v1h-1zM482 394h1v1h-1zM365 395h1v1h-1zM483 395h1v1h-1zM365 396h1v1h-1zM483 396h1v1h-1zM365 397h1v1h-1zM484 397h1v1h-1zM365 398h1v1h-1zM485 398h1v1h-1zM364 399h1v1h-1zM485 399h1v1h-1zM364 400h1v1h-1zM485 400h1v1h-1zM363 401h1v1h-1zM486 401h1v1h-1zM363 402h1v1h-1zM486 402h1v1h-1zM363 403h1v1h-1zM487 403h1v1h-1zM363 404h1v1h-1zM487 404h1v1h-1zM362 405h1v1h-1zM487 405h1v1h-1zM362 406h1v1h-1zM488 406h1v1h-1zM361 407h1v1h-1zM489 407h1v1h-1zM361 408h1v1h-1zM490 408h1v1h-1zM360 409h1v1h-1zM490 409h1v1h-1zM360 410h1v1h-1zM490 410h1v1h-1zM360 411h1v1h-1zM491 411h1v1h-1zM360 412h1v1h-1zM492 412h1v1h-1zM359 413h1v1h-1zM492 413h1v1h-1zM359 414h1v1h-1zM493 414h1v1h-1zM358 415h1v1h-1zM493 415h1v1h-1zM357 416h1v1h-1zM494 416h1v1h-1zM357 417h1v1h-1zM495 417h1v1h-1zM357 418h1v1h-1zM495 418h1v1h-1zM357 419h1v1h-1zM495 419h1v1h-1zM356 420h1v1h-1zM496 420h1v1h-1zM355 421h1v1h-1zM497 421h1v1h-1zM355 422h1v1h-1zM498 422h1v1h-1zM355 423h1v1h-1zM498 423h1v1h-1zM354 424h1v1h-1zM499 424h1v1h-1zM354 425h1v1h-1zM500 425h1v1h-1zM353 426h1v1h-1zM500 426h1v1h-1zM352 427h1v1h-1zM501 427h1v1h-1zM352 428h1v1h-1zM502 428h1v1h-1zM352 429h1v1h-1zM503 429h1v1h-1zM351 430h1v1h-1zM503 430h1v1h-1zM351 431h1v1h-1zM504 431h1v1h-1zM350 432h1v1h-1zM505 432h1v1h-1zM349 433h1v1h-1zM506 433h1v1h-1zM349 434h1v1h-1zM506 434h1v1h-1zM349 435h1v1h-1zM507 435h2v1h-2zM348 436h1v1h-1zM508 436h1v1h-1zM347 437h1v1h-1zM509 437h1v1h-1zM347 438h1v1h-1zM510 438h1v1h-1zM347 439h1v1h-1zM511 439h1v1h-1zM346 440h1v1h-1zM512 440h1v1h-1zM345 441h1v1h-1zM513 441h1v1h-1zM344 442h1v1h-1zM514 442h1v1h-1zM344 443h1v1h-1zM515 443h1v1h-1zM343 444h1v1h-1zM516 444h1v1h-1zM342 445h1v1h-1zM516 445h2v1h-2zM341 446h1v1h-1zM518 446h1v1h-1zM341 447h1v1h-1zM519 447h1v1h-1zM341 448h1v1h-1zM520 448h1v1h-1zM340 449h1v1h-1zM521 449h2v1h-2zM339 450h1v1h-1zM522 450h1v1h-1zM339 451h1v1h-1zM523 451h2v1h-2zM338 452h1v1h-1zM524 452h2v1h-2zM337 453h1v1h-1zM526 453h1v1h-1zM336 454h1v1h-1zM527 454h1v1h-1zM336 455h1v1h-1zM528 455h2v1h-2zM334 456h2v1h-2zM530 456h1v1h-1zM334 457h1v1h-1zM531 457h2v1h-2zM333 458h1v1h-1zM532 458h2v1h-2zM332 459h1v1h-1zM534 459h2v1h-2zM331 460h1v1h-1zM535 460h2v1h-2zM331 461h1v1h-1zM537 461h2v1h-2zM329 462h2v1h-2zM538 462h2v1h-2zM328 463h1v1h-1zM540 463h1v1h-1zM328 464h1v1h-1zM541 464h2v1h-2zM327 465h1v1h-1zM543 465h2v1h-2zM326 466h1v1h-1zM545 466h2v1h-2zM325 467h1v1h-1zM546 467h2v1h-2zM324 468h1v1h-1zM548 468h2v1h-2zM323 469h1v1h-1zM550 469h2v1h-2zM322 470h1v1h-1zM552 470h2v1h-2zM320 471h2v1h-2zM553 471h3v1h-3zM320 472h1v1h-1zM556 472h2v1h-2zM318 473h2v1h-2zM558 473h2v1h-2zM318 474h1v1h-1zM560 474h2v1h-2zM316 475h2v1h-2zM562 475h3v1h-3zM315 476h1v1h-1zM564 476h3v1h-3zM314 477h2v1h-2zM567 477h2v1h-2zM312 478h2v1h-2zM569 478h2v1h-2zM312 479h1v1h-1zM571 479h3v1h-3zM310 480h2v1h-2zM574 480h2v1h-2zM309 481h2v1h-2zM576 481h3v1h-3zM307 482h2v1h-2zM579 482h3v1h-3zM306 483h2v1h-2zM582 483h3v1h-3zM304 484h2v1h-2zM585 484h3v1h-3zM303 485h2v1h-2zM588 485h3v1h-3zM302 486h1v1h-1zM591 486h3v1h-3zM300 487h2v1h-2zM594 487h3v1h-3zM299 488h1v1h-1zM597 488h4v1h-4zM297 489h2v1h-2zM601 489h4v1h-4zM296 490h1v1h-1zM604 490h4v1h-4zM294 491h2v1h-2zM608 491h4v1h-4zM292 492h2v1h-2zM612 492h4v1h-4zM291 493h1v1h-1zM616 493h5v1h-5zM288 494h3v1h-3zM620 494h5v1h-5zM287 495h2v1h-2zM625 495h4v1h-4zM285 496h2v1h-2zM629 496h5v1h-5zM283 497h2v1h-2zM633 497h6v1h-6zM281 498h2v1h-2zM638 498h6v1h-6zM279 499h2v1h-2zM644 499h6v1h-6zM277 500h2v1h-2zM649 500h6v1h-6zM275 501h2v1h-2zM655 501h6v1h-6zM273 502h2v1h-2zM661 502h6v1h-6zM270 503h3v1h-3zM667 503h7v1h-7zM267 504h3v1h-3zM674 504h7v1h-7zM265 505h3v1h-3zM681 505h7v1h-7zM262 506h4v1h-4zM688 506h8v1h-8zM260 507h3v1h-3zM696 507h8v1h-8zM257 508h3v1h-3zM704 508h9v1h-9zM254 509h4v1h-4zM712 509h9v1h-9zM251 510h4v1h-4zM721 510h10v1h-10zM249 511h3v1h-3zM731 511h10v1h-10zM246 512h3v1h-3zM741 512h11v1h-11zM243 513h3v1h-3zM752 513h12v1h-12zM239 514h4v1h-4zM763 514h13v1h-13zM236 515h3v1h-3zM776 515h5v1h-5zM233 516h4v1h-4zM229 517h4v1h-4zM225 518h4v1h-4zM222 519h4v1h-4zM218 520h4v1h-4zM214 521h4v1h-4zM209 522h5v1h-5zM205 523h5v1h-5zM201 524h4v1h-4zM196 525h5v1h-5zM192 526h5v1h-5zM187 527h5v1h-5zM182 528h5v1h-5zM177 529h5v1h-5zM171 530h6v1h-6zM166 531h5v1h-5zM160 532h6v1h-6zM154 533h6v1h-6zM148 534h6v1h-6zM142 535h7v1h-7zM135 536h7v1h-7zM129 537h7v1h-7zM122 538h7v1h-7zM116 539h7v1h-7zM109 540h7v1h-7zM102 541h7v1h-7zM95 542h7v1h-7zM87 543h8v1h-8zM80 544h8v1h-8zM73 545h7v1h-7zM66 546h7v1h-7zM58 547h8v1h-8zM54 548h5v1h-5z"/><path fill="#0000ff" d="M55 534h365v1h-365zM55 535h1v1h-1zM419 535h1v1h-1zM55 536h1v1h-1zM419 536h1v1h-1zM55 537h1v1h-1zM419 537h1v1h-1zM55 538h1v1h-1zM419 538h1v1h-1zM55 539h1v1h-1zM419 539h1v1h-1zM55 540h1v1h-1zM419 540h1v1h-1zM55 541h1v1h-1zM419 541h1v1h-1zM54 542h1v1h-1zM419 542h1v1h-1zM54 543h1v1h-1zM419 543h1v1h-1zM54 544h1v1h-1zM419 544h1v1h-1zM54 545h1v1h-1zM419 545h1v1h-1zM54 546h1v1h-1zM419 546h1v1h-1zM54 547h1v1h-1zM419 547h1v1h-1zM54 548h1v1h-1zM420 548h1v1h-1zM420 549h1v1h-1zM420 550h1v1h-1zM420 551h1v1h-1zM420 552h1v1h-1zM420 553h1v1h-1zM420 554h1v1h-1zM420 555h1v1h-1zM420 556h1v1h-1zM420 557h1v1h-1zM420 558h1v1h-1zM420 559h1v1h-1zM420 560h1v1h-1zM420 561h1v1h-1zM420 562h361v1h-361z"/><path fill="#008000" d="M413 393h14v1h-14zM410 394h4v1h-4zM426 394h4v1h-4zM408 395h3v1h-3zM429 395h3v1h-3zM407 396h2v1h-2zM432 396h1v1h-1zM405 397h2v1h-2zM433 397h2v1h-2zM404 398h2v1h-2zM435 398h2v1h-2zM402 399h2v1h-2zM437 399h1v1h-1zM401 400h2v1h-2zM438 400h2v1h-2zM400 401h1v1h-1zM440 401h1v1h-1zM399 402h1v1h-1zM441 402h2v1h-2zM397 403h2v1h-2zM442 403h1v1h-1zM397 404h1v1h-1zM443 404h2v1h-2zM395 405h2v1h-2zM445 405h1v1h-1zM394 406h1v1h-1zM446 406h1v1h-1zM393 407h2v1h-2zM447 407h1v1h-1zM392 408h1v1h-1zM448 408h1v1h-1zM392 409h1v1h-1zM449 409h2v1h-2zM391 410h1v1h-1zM450 410h2v1h-2zM389 411h2v1h-2zM452 411h1v1h-1zM389 412h1v1h-1zM453 412h1v1h-1zM388 413h1v1h-1zM454 413h1v1h-1zM387 414h1v1h-1zM455 414h1v1h-1zM386 415h2v1h-2zM456 415h1v1h-1zM385 416h1v1h-1zM457 416h1v1h-1zM384 417h1v1h-1zM458 417h1v1h-1zM384 418h1v1h-1zM459 418h1v1h-1zM382 419h2v1h-2zM460 419h2v1h-2zM381 420h1v1h-1zM461 420h1v1h-1zM381 421h1v1h-1zM462 421h2v1h-2zM380 422h1v1h-1zM463 422h1v1h-1zM379 423h1v1h-1zM464 423h2v1h-2zM379 424h1v1h-1zM466 424h1v1h-1zM377 425h2v1h-2zM466 425h2v1h-2zM376 426h1v1h-1zM468 426h1v1h-1zM376 427h1v1h-1zM469 427h1v1h-1zM375 428h1v1h-1zM470 428h1v1h-1zM374 429h1v1h-1zM471 429h1v1h-1zM373 430h1v1h-1zM472 430h1v1h-1zM372 431h2v1h-2zM473 431h2v1h-2zM371 432h1v1h-1zM474 432h2v1h-2zM371 433h1v1h-1zM476 433h1v1h-1zM370 434h1v1h-1zM477 434h1v1h-1zM369 435h1v1h-1zM478 435h1v1h-1zM368 436h1v1h-1zM479 436h1v1h-1zM367 437h1v1h-1zM480 437h2v1h-2zM366 438h1v1h-1zM482 438h1v1h-1zM365 439h1v1h-1zM482 439h2v1h-2zM364 440h2v1h-2zM484 440h2v1h-2zM363 441h1v1h-1zM485 441h2v1h-2zM363 442h1v1h-1zM487 442h1v1h-1zM362 443h1v1h-1zM487 443h2v1h-2zM360 444h2v1h-2zM489 444h2v1h-2zM360 445h1v1h-1zM490 445h2v1h-2zM359 446h1v1h-1zM492 446h2v1h-2zM358 447h1v1h-1zM493 447h1v1h-1zM357 448h1v1h-1zM494 448h2v1h-2zM356 449h1v1h-1zM495 449h2v1h-2zM355 450h1v1h-1zM497 450h2v1h-2zM354 451h2v1h-2zM498 451h2v1h-2zM353 452h1v1h-1zM500 452h1v1h-1zM352 453h1v1h-1zM501 453h2v1h-2zM351 454h1v1h-1zM503 454h2v1h-2zM350 455h1v1h-1zM505 455h2v1h-2zM349 456h1v1h-1zM506 456h2v1h-2zM348 457h1v1h-1zM508 457h1v1h-1zM347 458h1v1h-1zM509 458h2v1h-2zM346 459h1v1h-1zM511 459h2v1h-2zM344 460h2v1h-2zM513 460h2v1h-2zM344 461h1v1h-1zM514 461h2v1h-2zM342 462h2v1h-2zM516 462h2v1h-2zM341 463h1v1h-1zM518 463h2v1h-2zM340 464h2v1h-2zM519 464h3v1h-3zM339 465h1v1h-1zM522 465h2v1h-2zM338 466h1v1h-1zM524 466h1v1h-1zM336 467h2v1h-2zM525 467h3v1h-3zM336 468h1v1h-1zM527 468h3v1h-3zM334 469h2v1h-2zM530 469h2v1h-2zM333 470h2v1h-2zM532 470h2v1h-2zM331 471h2v1h-2zM534 471h2v1h-2zM331 472h1v1h-1zM536 472h3v1h-3zM329 473h2v1h-2zM538 473h3v1h-3zM328 474h1v1h-1zM540 474h4v1h-4zM326 475h2v1h-2zM543 475h3v1h-3zM325 476h2v1h-2zM546 476h2v1h-2zM323 477h2v1h-2zM548 477h3v1h-3zM322 478h2v1h-2zM551 478h3v1h-3zM320 479h2v1h-2zM553 479h3v1h-3zM319 480h2v1h-2zM556 480h3v1h-3zM318 481h1v1h-1zM559 481h3v1h-3zM316 482h2v1h-2zM561 482h4v1h-4zM315 483h1v1h-1zM564 483h4v1h-4zM312 484h3v1h-3zM568 484h3v1h-3zM311 485h2v1h-2zM571 485h4v1h-4zM310 486h1v1h-1zM575 486h3v1h-3zM308 487h2v1h-2zM577 487h4v1h-4zM306 488h2v1h-2zM581 488h4v1h-4zM304 489h2v1h-2zM585 489h4v1h-4zM302 490h3v1h-3zM589 490h4v1h-4zM301 491h2v1h-2zM593 491h4v1h-4zM299 492h2v1h-2zM597 492h4v1h-4zM296 493h3v1h-3zM601 493h4v1h-4zM294 494h3v1h-3zM605 494h5v1h-5zM293 495h2v1h-2zM610 495h5v1h-5zM291 496h2v1h-2zM614 496h6v1h-6zM288 497h3v1h-3zM620 497h5v1h-5zM286 498h3v1h-3zM625 498h6v1h-6zM284 499h3v1h-3zM630 499h7v1h-7zM282 500h2v1h-2zM636 500h6v1h-6zM279 501h3v1h-3zM642 501h6v1h-6zM277 502h2v1h-2zM648 502h7v1h-7zM275 503h2v1h-2zM654 503h7v1h-7zM272 504h3v1h-3zM661 504h7v1h-7zM269 505h3v1h-3zM668 505h8v1h-8zM267 506h2v1h-2zM676 506h8v1h-8zM264 507h3v1h-3zM683 507h9v1h-9zM261 508h3v1h-3zM692 508h9v1h-9zM258 509h3v1h-3zM701 509h10v1h-10zM255 510h3v1h-3zM710 510h10v1h-10zM252 511h3v1h-3zM720 511h11v1h-11zM249 512h3v1h-3zM731 512h11v1h-11zM246 513h3v1h-3zM742 513h11v1h-11zM242 514h4v1h-4zM753 514h13v1h-13zM238 515h4v1h-4zM765 515h15v1h-15zM235 516h4v1h-4zM779 516h2v1h-2zM231 517h4v1h-4zM228 518h3v1h-3zM224 519h4v1h-4zM220 520h4v1h-4zM215 521h5v1h-5zM211 522h4v1h-4zM206 523h5v1h-5zM202 524h5v1h-5zM198 525h4v1h-4zM193 526h5v1h-5zM188 527h5v1h-5zM183 528h5v1h-5zM177 529h6v1h-6zM172 530h6v1h-6zM166 531h6v1h-6zM161 532h5v1h-5zM154 533h7v1h-7zM148 534h6v1h-6zM142 535h7v1h-7zM136 536h6v1h-6zM130 537h6v1h-6zM123 538h7v1h-7zM116 539h7v1h-7zM109 540h7v1h-7zM102 541h7v1h-7zM95 542h7v1h-7zM87 543h8v1h-8zM80 544h8v1h-8zM73 545h7v1h-7zM66 546h7v1h-7zM58 547h8v1h-8zM54 548h5v1h-5z"/><path fill="#ff00ff" d="M54 534h63v1h-63zM116 535h97v1h-97zM213 536h58v1h-58zM270 537h36v1h-36zM306 538h24v1h-24zM330 539h18v1h-18zM347 540h14v1h-14zM361 541h11v1h-11zM372 542h9v1h-9zM381 543h9v1h-9zM389 544h8v1h-8zM397 545h6v1h-6zM403 546h7v1h-7zM410 547h7v1h-7zM416 548h7v1h-7zM423 549h7v1h-7zM430 550h7v1h-7zM437 551h8v1h-8zM445 552h9v1h-9zM453 553h10v1h-10zM463 554h12v1h-12zM475 555h16v1h-16zM490 556h20v1h-20zM510 557h29v1h-29zM539 558h47v1h-47zM585 559h88v1h-88zM673 560h108v1h-108z"/></g></svg><div style="position:absolute;left:30px;top:590px;width:1px;height:49px;background:#800000;"></div><div style="position:absolute;left:32px;top:591px;width:773px;height:1px;background:#a0a0a0;"></div><div style="position:absolute;left:32px;top:591px;width:1px;height:47px;background:#a0a0a0;"></div><div style="position:absolute;left:33px;top:592px;width:771px;height:45px;background:#f0f0f0;"></div><div style="position:absolute;left:32px;top:637px;width:773px;height:1px;background:#ffffff;"></div><div style="position:absolute;left:30px;top:638px;width:776px;height:1px;background:#a8b0b0;"></div><div style="position:absolute;left:805px;top:591px;width:1px;height:48px;background:#a8b0b0;"></div><div class="t" style="left:40px;top:594px;font-size:13px;font-weight:bold;font-style:italic;-webkit-text-stroke:0.35px currentColor;color:#008000;transform-origin:0 0;transform:scaleX(1.1)">Wertebereich:</div><div class="t" style="left:39px;top:616px;font-size:13px;font-weight:bold;font-style:italic;-webkit-text-stroke:0.35px currentColor;color:#000080">Ymin:</div><div class="t" style="left:144px;top:616px;font-size:13px;font-weight:bold;font-style:italic;-webkit-text-stroke:0.35px currentColor;color:#000080;transform-origin:0 0;transform:scaleX(1.04)">Ymax:</div><div style="position:absolute;left:77px;top:611px;width:59px;height:24px;background:#f3f3f3;border:1px solid #dcdcdc;border-bottom:1px solid #8a8a8a;border-radius:3px"></div><div class="t" style="left:79px;top:616px;font-size:13px;font-weight:bold;color:#800000;letter-spacing:0.3px;-webkit-text-stroke:0.2px currentColor;transform-origin:0 0;transform:scaleX(1.12)">-100</div><div style="position:absolute;left:192px;top:611px;width:59px;height:24px;background:#f3f3f3;border:1px solid #dcdcdc;border-bottom:1px solid #8a8a8a;border-radius:3px"></div><div class="t" style="left:194px;top:616px;font-size:13px;font-weight:bold;color:#800000;letter-spacing:0.3px;-webkit-text-stroke:0.2px currentColor;transform-origin:0 0;transform:scaleX(1.12)">3000</div><div style="position:absolute;left:269px;top:608px;width:13px;height:13px;border:1px solid #333;border-radius:3px;background:#f6f6f6"></div><div style="position:absolute;left:269px;top:623px;width:13px;height:13px;border:1px solid #333;border-radius:3px;background:#f6f6f6"></div><div class="t" style="left:285px;top:609px;font-size:12px;font-weight:bold;color:#000">Maßstab 1:1</div><div class="t" style="left:285px;top:624px;font-size:12px;font-weight:bold;color:#000">Asymptote</div><div style="position:absolute;left:363px;top:598px;width:3px;height:35px;background:#ffff00;border:1px solid #000080"></div><div style="position:absolute;left:439px;top:598px;width:3px;height:35px;background:#ffff00;border:1px solid #000080"></div><div style="position:absolute;left:686px;top:598px;width:3px;height:35px;background:#ffff00;border:1px solid #000080"></div><div style="position:absolute;left:374px;top:602px;width:33px;height:27px;background:#fbfbfb;border:1px solid #d5d5d5;border-radius:4px"></div><div style="position:absolute;left:414px;top:609px;width:21px;height:20px;background:#fbfbfb;border:1px solid #d5d5d5;border-radius:4px"></div><div style="position:absolute;left:447px;top:602px;width:33px;height:27px;background:#fbfbfb;border:1px solid #d5d5d5;border-radius:4px"></div><div style="position:absolute;left:695px;top:602px;width:63px;height:27px;background:#fbfbfb;border:1px solid #d5d5d5;border-radius:4px"></div><div style="position:absolute;left:766px;top:602px;width:27px;height:27px;background:#fbfbfb;border:1px solid #d5d5d5;border-radius:4px"></div><svg style="position:absolute;left:383px;top:608px" width="16" height="16" shape-rendering="crispEdges"><rect x="3" y="0" width="6" height="1" fill="#000000"/><rect x="3" y="1" width="1" height="1" fill="#000000"/><rect x="4" y="1" width="5" height="1" fill="#ffffff"/><rect x="9" y="1" width="1" height="1" fill="#000000"/><rect x="3" y="2" width="1" height="1" fill="#000000"/><rect x="4" y="2" width="1" height="1" fill="#ffffff"/><rect x="5" y="2" width="2" height="1" fill="#000000"/><rect x="7" y="2" width="2" height="1" fill="#ffffff"/><rect x="9" y="2" width="2" height="1" fill="#000000"/><rect x="3" y="3" width="1" height="1" fill="#000000"/><rect x="4" y="3" width="5" height="1" fill="#ffffff"/><rect x="9" y="3" width="1" height="1" fill="#000000"/><rect x="10" y="3" width="1" height="1" fill="#ffffff"/><rect x="11" y="3" width="1" height="1" fill="#000000"/><rect x="3" y="4" width="1" height="1" fill="#000000"/><rect x="4" y="4" width="1" height="1" fill="#ffffff"/><rect x="5" y="4" width="2" height="1" fill="#000000"/><rect x="7" y="4" width="2" height="1" fill="#ffffff"/><rect x="9" y="4" width="4" height="1" fill="#000000"/><rect x="3" y="5" width="1" height="1" fill="#000000"/><rect x="4" y="5" width="8" height="1" fill="#ffffff"/><rect x="12" y="5" width="1" height="1" fill="#000000"/><rect x="3" y="6" width="1" height="1" fill="#000000"/><rect x="4" y="6" width="1" height="1" fill="#ffffff"/><rect x="5" y="6" width="4" height="1" fill="#000000"/><rect x="9" y="6" width="1" height="1" fill="#ffffff"/><rect x="10" y="6" width="1" height="1" fill="#000000"/><rect x="11" y="6" width="1" height="1" fill="#ffffff"/><rect x="12" y="6" width="1" height="1" fill="#000000"/><rect x="3" y="7" width="1" height="1" fill="#000000"/><rect x="4" y="7" width="8" height="1" fill="#ffffff"/><rect x="12" y="7" width="1" height="1" fill="#000000"/><rect x="0" y="8" width="16" height="1" fill="#000000"/><rect x="0" y="9" width="1" height="1" fill="#000000"/><rect x="1" y="9" width="1" height="1" fill="#ffffff"/><rect x="2" y="9" width="1" height="1" fill="#d8d8d8"/><rect x="3" y="9" width="1" height="1" fill="#ffffff"/><rect x="4" y="9" width="1" height="1" fill="#d8d8d8"/><rect x="5" y="9" width="1" height="1" fill="#ffffff"/><rect x="6" y="9" width="1" height="1" fill="#d8d8d8"/><rect x="7" y="9" width="1" height="1" fill="#ffffff"/><rect x="8" y="9" width="1" height="1" fill="#d8d8d8"/><rect x="9" y="9" width="1" height="1" fill="#ffffff"/><rect x="10" y="9" width="1" height="1" fill="#d8d8d8"/><rect x="11" y="9" width="1" height="1" fill="#ffffff"/><rect x="12" y="9" width="1" height="1" fill="#d8d8d8"/><rect x="13" y="9" width="2" height="1" fill="#ffffff"/><rect x="15" y="9" width="1" height="1" fill="#000000"/><rect x="0" y="10" width="1" height="1" fill="#000000"/><rect x="1" y="10" width="1" height="1" fill="#d8d8d8"/><rect x="2" y="10" width="1" height="1" fill="#ffffff"/><rect x="3" y="10" width="1" height="1" fill="#d8d8d8"/><rect x="4" y="10" width="1" height="1" fill="#ffffff"/><rect x="5" y="10" width="1" height="1" fill="#d8d8d8"/><rect x="6" y="10" width="1" height="1" fill="#ffffff"/><rect x="7" y="10" width="1" height="1" fill="#d8d8d8"/><rect x="8" y="10" width="1" height="1" fill="#ffffff"/><rect x="9" y="10" width="1" height="1" fill="#d8d8d8"/><rect x="10" y="10" width="1" height="1" fill="#ffffff"/><rect x="11" y="10" width="1" height="1" fill="#d8d8d8"/><rect x="12" y="10" width="1" height="1" fill="#ffffff"/><rect x="13" y="10" width="1" height="1" fill="#ff0000"/><rect x="14" y="10" width="1" height="1" fill="#ffffff"/><rect x="15" y="10" width="1" height="1" fill="#000000"/><rect x="0" y="11" width="1" height="1" fill="#000000"/><rect x="1" y="11" width="1" height="1" fill="#ffffff"/><rect x="2" y="11" width="1" height="1" fill="#d8d8d8"/><rect x="3" y="11" width="1" height="1" fill="#ffffff"/><rect x="4" y="11" width="1" height="1" fill="#d8d8d8"/><rect x="5" y="11" width="1" height="1" fill="#ffffff"/><rect x="6" y="11" width="1" height="1" fill="#d8d8d8"/><rect x="7" y="11" width="1" height="1" fill="#ffffff"/><rect x="8" y="11" width="1" height="1" fill="#d8d8d8"/><rect x="9" y="11" width="1" height="1" fill="#ffffff"/><rect x="10" y="11" width="1" height="1" fill="#d8d8d8"/><rect x="11" y="11" width="1" height="1" fill="#ffffff"/><rect x="12" y="11" width="1" height="1" fill="#d8d8d8"/><rect x="13" y="11" width="2" height="1" fill="#ffffff"/><rect x="15" y="11" width="1" height="1" fill="#000000"/><rect x="0" y="12" width="16" height="1" fill="#000000"/><rect x="0" y="13" width="1" height="1" fill="#000000"/><rect x="1" y="13" width="14" height="1" fill="#c0c0c0"/><rect x="15" y="13" width="1" height="1" fill="#000000"/><rect x="0" y="14" width="1" height="1" fill="#000000"/><rect x="1" y="14" width="14" height="1" fill="#c0c0c0"/><rect x="15" y="14" width="1" height="1" fill="#000000"/><rect x="1" y="15" width="14" height="1" fill="#000000"/></svg><svg style="position:absolute;left:416px;top:610px" width="18" height="18" shape-rendering="crispEdges"><rect x="4" y="1" width="2" height="1" fill="#808000"/><rect x="7" y="1" width="3" height="1" fill="#000000"/><rect x="4" y="2" width="1" height="1" fill="#808000"/><rect x="5" y="2" width="6" height="1" fill="#000000"/><rect x="3" y="3" width="7" height="1" fill="#000000"/><rect x="10" y="3" width="1" height="1" fill="#ffffff"/><rect x="11" y="3" width="1" height="1" fill="#000000"/><rect x="1" y="4" width="7" height="1" fill="#000000"/><rect x="8" y="4" width="1" height="1" fill="#ffffff"/><rect x="9" y="4" width="4" height="1" fill="#000000"/><rect x="1" y="5" width="1" height="1" fill="#000000"/><rect x="2" y="5" width="1" height="1" fill="#ffffff"/><rect x="3" y="5" width="3" height="1" fill="#000000"/><rect x="6" y="5" width="2" height="1" fill="#ffffff"/><rect x="8" y="5" width="2" height="1" fill="#808000"/><rect x="10" y="5" width="2" height="1" fill="#ffffff"/><rect x="12" y="5" width="1" height="1" fill="#000000"/><rect x="1" y="6" width="1" height="1" fill="#000000"/><rect x="2" y="6" width="2" height="1" fill="#ffffff"/><rect x="4" y="6" width="1" height="1" fill="#000000"/><rect x="5" y="6" width="3" height="1" fill="#ffffff"/><rect x="8" y="6" width="3" height="1" fill="#808000"/><rect x="11" y="6" width="1" height="1" fill="#ffffff"/><rect x="12" y="6" width="2" height="1" fill="#000000"/><rect x="1" y="7" width="5" height="1" fill="#000000"/><rect x="6" y="7" width="3" height="1" fill="#ffffff"/><rect x="9" y="7" width="2" height="1" fill="#808000"/><rect x="11" y="7" width="2" height="1" fill="#ffffff"/><rect x="13" y="7" width="1" height="1" fill="#000000"/><rect x="4" y="8" width="1" height="1" fill="#000000"/><rect x="5" y="8" width="5" height="1" fill="#ffffff"/><rect x="10" y="8" width="2" height="1" fill="#808000"/><rect x="12" y="8" width="1" height="1" fill="#ffffff"/><rect x="13" y="8" width="1" height="1" fill="#000000"/><rect x="1" y="9" width="10" height="1" fill="#000000"/><rect x="11" y="9" width="2" height="1" fill="#808000"/><rect x="13" y="9" width="4" height="1" fill="#000000"/><rect x="1" y="10" width="1" height="1" fill="#000000"/><rect x="2" y="10" width="1" height="1" fill="#ffffff"/><rect x="3" y="10" width="1" height="1" fill="#d8d8d8"/><rect x="4" y="10" width="1" height="1" fill="#ffffff"/><rect x="5" y="10" width="1" height="1" fill="#d8d8d8"/><rect x="6" y="10" width="1" height="1" fill="#ffffff"/><rect x="7" y="10" width="1" height="1" fill="#d8d8d8"/><rect x="8" y="10" width="1" height="1" fill="#ffffff"/><rect x="9" y="10" width="1" height="1" fill="#d8d8d8"/><rect x="10" y="10" width="1" height="1" fill="#ffffff"/><rect x="11" y="10" width="1" height="1" fill="#000000"/><rect x="12" y="10" width="2" height="1" fill="#808000"/><rect x="14" y="10" width="2" height="1" fill="#ffffff"/><rect x="16" y="10" width="1" height="1" fill="#000000"/><rect x="1" y="11" width="1" height="1" fill="#000000"/><rect x="2" y="11" width="1" height="1" fill="#ffffff"/><rect x="3" y="11" width="1" height="1" fill="#ff0000"/><rect x="4" y="11" width="1" height="1" fill="#ffffff"/><rect x="5" y="11" width="1" height="1" fill="#d8d8d8"/><rect x="6" y="11" width="1" height="1" fill="#ffffff"/><rect x="7" y="11" width="1" height="1" fill="#d8d8d8"/><rect x="8" y="11" width="1" height="1" fill="#ffffff"/><rect x="9" y="11" width="1" height="1" fill="#d8d8d8"/><rect x="10" y="11" width="1" height="1" fill="#ffffff"/><rect x="11" y="11" width="1" height="1" fill="#d8d8d8"/><rect x="12" y="11" width="1" height="1" fill="#ffffff"/><rect x="13" y="11" width="2" height="1" fill="#808000"/><rect x="15" y="11" width="1" height="1" fill="#ffffff"/><rect x="16" y="11" width="1" height="1" fill="#000000"/><rect x="1" y="12" width="1" height="1" fill="#000000"/><rect x="2" y="12" width="9" height="1" fill="#ffffff"/><rect x="11" y="12" width="2" height="1" fill="#000000"/><rect x="13" y="12" width="2" height="1" fill="#808000"/><rect x="15" y="12" width="1" height="1" fill="#ffffff"/><rect x="16" y="12" width="1" height="1" fill="#000000"/><rect x="1" y="13" width="13" height="1" fill="#000000"/><rect x="14" y="13" width="2" height="1" fill="#808000"/><rect x="16" y="13" width="1" height="1" fill="#000000"/><rect x="1" y="14" width="1" height="1" fill="#000000"/><rect x="2" y="14" width="12" height="1" fill="#c0c0c0"/><rect x="14" y="14" width="1" height="1" fill="#000000"/><rect x="15" y="14" width="2" height="1" fill="#808000"/><rect x="1" y="15" width="1" height="1" fill="#000000"/><rect x="2" y="15" width="13" height="1" fill="#c0c0c0"/><rect x="15" y="15" width="1" height="1" fill="#000000"/><rect x="16" y="15" width="1" height="1" fill="#808000"/><rect x="2" y="16" width="14" height="1" fill="#000000"/></svg><svg style="position:absolute;left:455px;top:606px" width="18" height="18" shape-rendering="crispEdges"><rect x="1" y="2" width="4" height="1" fill="#00ffff"/><rect x="5" y="2" width="9" height="1" fill="#000000"/><rect x="1" y="3" width="3" height="1" fill="#00ffff"/><rect x="4" y="3" width="1" height="1" fill="#000000"/><rect x="5" y="3" width="1" height="1" fill="#ffff00"/><rect x="6" y="3" width="1" height="1" fill="#ffffff"/><rect x="7" y="3" width="1" height="1" fill="#ffff00"/><rect x="8" y="3" width="1" height="1" fill="#ffffff"/><rect x="9" y="3" width="2" height="1" fill="#ffff00"/><rect x="11" y="3" width="1" height="1" fill="#000000"/><rect x="12" y="3" width="2" height="1" fill="#ffffff"/><rect x="14" y="3" width="1" height="1" fill="#000000"/><rect x="1" y="4" width="2" height="1" fill="#00ffff"/><rect x="3" y="4" width="1" height="1" fill="#000000"/><rect x="4" y="4" width="1" height="1" fill="#ffffff"/><rect x="5" y="4" width="1" height="1" fill="#ffff00"/><rect x="6" y="4" width="1" height="1" fill="#ffffff"/><rect x="7" y="4" width="1" height="1" fill="#ffff00"/><rect x="8" y="4" width="1" height="1" fill="#000000"/><rect x="9" y="4" width="3" height="1" fill="#ffff00"/><rect x="12" y="4" width="1" height="1" fill="#000000"/><rect x="13" y="4" width="2" height="1" fill="#ffffff"/><rect x="15" y="4" width="1" height="1" fill="#000000"/><rect x="1" y="5" width="1" height="1" fill="#00ffff"/><rect x="2" y="5" width="1" height="1" fill="#000000"/><rect x="3" y="5" width="1" height="1" fill="#ffff00"/><rect x="4" y="5" width="1" height="1" fill="#ffffff"/><rect x="5" y="5" width="1" height="1" fill="#ffff00"/><rect x="6" y="5" width="1" height="1" fill="#ffffff"/><rect x="7" y="5" width="1" height="1" fill="#ffff00"/><rect x="8" y="5" width="1" height="1" fill="#ffffff"/><rect x="9" y="5" width="3" height="1" fill="#ffff00"/><rect x="12" y="5" width="5" height="1" fill="#000000"/><rect x="1" y="6" width="1" height="1" fill="#000000"/><rect x="2" y="6" width="1" height="1" fill="#ffff00"/><rect x="3" y="6" width="1" height="1" fill="#ffffff"/><rect x="4" y="6" width="1" height="1" fill="#ffff00"/><rect x="5" y="6" width="1" height="1" fill="#ffffff"/><rect x="6" y="6" width="1" height="1" fill="#ffff00"/><rect x="7" y="6" width="2" height="1" fill="#000000"/><rect x="9" y="6" width="2" height="1" fill="#ffff00"/><rect x="11" y="6" width="1" height="1" fill="#000000"/><rect x="12" y="6" width="4" height="1" fill="#ffffff"/><rect x="16" y="6" width="1" height="1" fill="#000000"/><rect x="1" y="7" width="1" height="1" fill="#000000"/><rect x="2" y="7" width="1" height="1" fill="#ffffff"/><rect x="3" y="7" width="1" height="1" fill="#ffff00"/><rect x="4" y="7" width="1" height="1" fill="#ffffff"/><rect x="5" y="7" width="1" height="1" fill="#ffff00"/><rect x="6" y="7" width="1" height="1" fill="#ffffff"/><rect x="7" y="7" width="1" height="1" fill="#000000"/><rect x="8" y="7" width="1" height="1" fill="#ffff00"/><rect x="9" y="7" width="1" height="1" fill="#000000"/><rect x="10" y="7" width="2" height="1" fill="#ffff00"/><rect x="12" y="7" width="1" height="1" fill="#000000"/><rect x="13" y="7" width="3" height="1" fill="#ffffff"/><rect x="16" y="7" width="1" height="1" fill="#000000"/><rect x="2" y="8" width="1" height="1" fill="#000000"/><rect x="3" y="8" width="1" height="1" fill="#ffff00"/><rect x="4" y="8" width="1" height="1" fill="#ffffff"/><rect x="5" y="8" width="1" height="1" fill="#ffff00"/><rect x="6" y="8" width="1" height="1" fill="#000000"/><rect x="7" y="8" width="1" height="1" fill="#ffff00"/><rect x="8" y="8" width="1" height="1" fill="#000000"/><rect x="9" y="8" width="1" height="1" fill="#ffff00"/><rect x="10" y="8" width="1" height="1" fill="#000000"/><rect x="11" y="8" width="1" height="1" fill="#ffff00"/><rect x="12" y="8" width="1" height="1" fill="#000000"/><rect x="13" y="8" width="3" height="1" fill="#ffffff"/><rect x="16" y="8" width="1" height="1" fill="#000000"/><rect x="2" y="9" width="2" height="1" fill="#000000"/><rect x="4" y="9" width="1" height="1" fill="#ffff00"/><rect x="5" y="9" width="1" height="1" fill="#000000"/><rect x="6" y="9" width="1" height="1" fill="#ffff00"/><rect x="7" y="9" width="2" height="1" fill="#000000"/><rect x="9" y="9" width="2" height="1" fill="#ffff00"/><rect x="11" y="9" width="1" height="1" fill="#000000"/><rect x="12" y="9" width="2" height="1" fill="#ffffff"/><rect x="14" y="9" width="1" height="1" fill="#000000"/><rect x="15" y="9" width="1" height="1" fill="#ffffff"/><rect x="16" y="9" width="1" height="1" fill="#000000"/><rect x="3" y="10" width="2" height="1" fill="#000000"/><rect x="5" y="10" width="1" height="1" fill="#ffff00"/><rect x="6" y="10" width="2" height="1" fill="#000000"/><rect x="8" y="10" width="2" height="1" fill="#ffff00"/><rect x="10" y="10" width="2" height="1" fill="#000000"/><rect x="12" y="10" width="4" height="1" fill="#ffffff"/><rect x="16" y="10" width="1" height="1" fill="#000000"/><rect x="5" y="11" width="2" height="1" fill="#000000"/><rect x="7" y="11" width="4" height="1" fill="#ffffff"/><rect x="11" y="11" width="2" height="1" fill="#000000"/><rect x="13" y="11" width="1" height="1" fill="#ffffff"/><rect x="14" y="11" width="1" height="1" fill="#000000"/><rect x="15" y="11" width="1" height="1" fill="#ffffff"/><rect x="16" y="11" width="1" height="1" fill="#000000"/><rect x="5" y="12" width="1" height="1" fill="#000000"/><rect x="6" y="12" width="10" height="1" fill="#ffffff"/><rect x="16" y="12" width="1" height="1" fill="#000000"/><rect x="5" y="13" width="1" height="1" fill="#000000"/><rect x="6" y="13" width="1" height="1" fill="#ffffff"/><rect x="7" y="13" width="2" height="1" fill="#000000"/><rect x="9" y="13" width="1" height="1" fill="#ffffff"/><rect x="10" y="13" width="2" height="1" fill="#000000"/><rect x="12" y="13" width="1" height="1" fill="#ffffff"/><rect x="13" y="13" width="2" height="1" fill="#000000"/><rect x="15" y="13" width="1" height="1" fill="#ffffff"/><rect x="16" y="13" width="1" height="1" fill="#000000"/><rect x="5" y="14" width="1" height="1" fill="#000000"/><rect x="6" y="14" width="10" height="1" fill="#ffffff"/><rect x="16" y="14" width="1" height="1" fill="#000000"/><rect x="5" y="15" width="1" height="1" fill="#000000"/><rect x="6" y="15" width="1" height="1" fill="#ffffff"/><rect x="7" y="15" width="3" height="1" fill="#000000"/><rect x="10" y="15" width="1" height="1" fill="#ffffff"/><rect x="11" y="15" width="1" height="1" fill="#000000"/><rect x="12" y="15" width="1" height="1" fill="#ffffff"/><rect x="13" y="15" width="2" height="1" fill="#000000"/><rect x="15" y="15" width="1" height="1" fill="#ffffff"/><rect x="16" y="15" width="1" height="1" fill="#000000"/><rect x="5" y="16" width="1" height="1" fill="#000000"/><rect x="6" y="16" width="10" height="1" fill="#ffffff"/><rect x="16" y="16" width="1" height="1" fill="#000000"/><rect x="5" y="17" width="12" height="1" fill="#000000"/></svg><div style="position:absolute;left:492px;top:601px;width:15px;height:15px;border-radius:50%;background:#ff0000;border:1px solid #000"></div><div style="position:absolute;left:492px;top:618px;width:15px;height:15px;border-radius:50%;background:#0000ff;border:1px solid #000"></div><div style="position:absolute;left:589px;top:601px;width:15px;height:15px;border-radius:50%;background:#008000;border:1px solid #000"></div><div style="position:absolute;left:589px;top:618px;width:15px;height:15px;border-radius:50%;background:#ff00ff;border:1px solid #000"></div><div style="position:absolute;left:510px;top:601px;width:13px;height:13px;border-radius:3px;background:#0067c0"></div><svg style="position:absolute;left:510px;top:601px" width="13" height="13"><path d="M3.2 6.8 L5.4 9 L10 4" stroke="#fff" stroke-width="1" fill="none"/></svg><div class="t" style="left:526px;top:602px;font-size:12px;font-weight:bold;color:#000;transform-origin:0 0;transform:scaleX(0.96)">Funkt.: 1</div><div style="position:absolute;left:510px;top:619px;width:13px;height:13px;border-radius:3px;background:#0067c0"></div><svg style="position:absolute;left:510px;top:619px" width="13" height="13"><path d="M3.2 6.8 L5.4 9 L10 4" stroke="#fff" stroke-width="1" fill="none"/></svg><div class="t" style="left:526px;top:620px;font-size:12px;font-weight:bold;color:#000;transform-origin:0 0;transform:scaleX(0.96)">Funkt.: 2</div><div style="position:absolute;left:607px;top:601px;width:13px;height:13px;border-radius:3px;background:#0067c0"></div><svg style="position:absolute;left:607px;top:601px" width="13" height="13"><path d="M3.2 6.8 L5.4 9 L10 4" stroke="#fff" stroke-width="1" fill="none"/></svg><div class="t" style="left:623px;top:602px;font-size:12px;font-weight:bold;color:#000;transform-origin:0 0;transform:scaleX(0.96)">Funkt.: 3</div><div style="position:absolute;left:607px;top:619px;width:13px;height:13px;border-radius:3px;background:#0067c0"></div><svg style="position:absolute;left:607px;top:619px" width="13" height="13"><path d="M3.2 6.8 L5.4 9 L10 4" stroke="#fff" stroke-width="1" fill="none"/></svg><div class="t" style="left:623px;top:620px;font-size:12px;font-weight:bold;color:#000;transform-origin:0 0;transform:scaleX(0.96)">Funkt.: 4</div><div class="t" style="left:701px;top:610px;font-size:13px;font-weight:bold;color:#800000;transform-origin:0 0;transform:scaleX(0.9)">Close</div><svg style="position:absolute;left:734px;top:607px" width="18" height="17"><path d="M1 1 L16 8.5 L5 8.5 Z" fill="#0000ff"/><path d="M1 16 L16 8.5 L5 8.5 Z" fill="#000080"/><rect x="1" y="8" width="16" height="1.3" fill="#ff0000"/></svg><svg style="position:absolute;left:770px;top:606px" width="20" height="20"><rect x="0" y="0" width="20" height="20" fill="#e2e2e2"/><g id="ar" fill="#000080"><path d="M0 0 L8.8 2.3 L4.2 3.6 L3.6 4.2 L2.3 8.8 Z"/><path d="M3 4.6 L4.6 3 L9.4 7.9 L7.9 9.4 Z"/></g><use href="#ar" transform="translate(20 0) scale(-1 1)"/><use href="#ar" transform="translate(0 20) scale(1 -1)"/><use href="#ar" transform="translate(20 20) scale(-1 -1)"/></svg></body></html>
